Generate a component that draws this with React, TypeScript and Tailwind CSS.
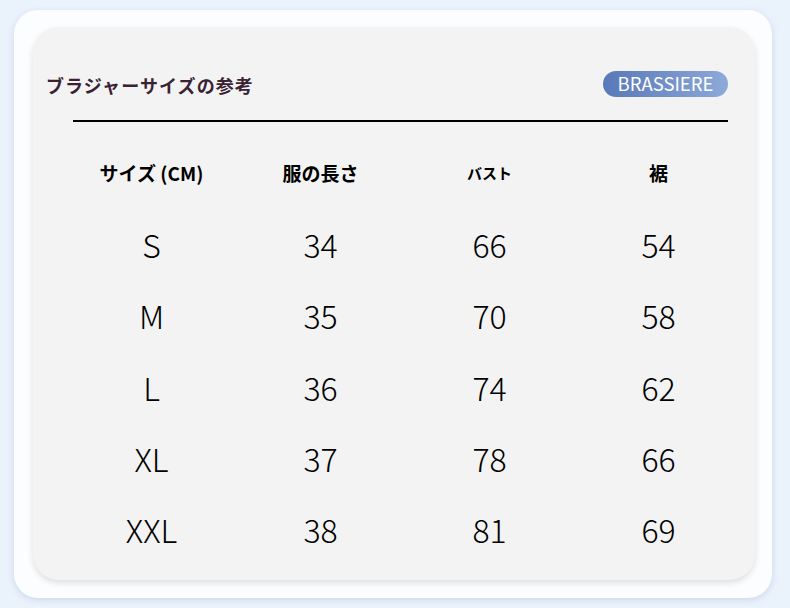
import React from "react";

const rows = [
  ["S", "34", "66", "54"],
  ["M", "35", "70", "58"],
  ["L", "36", "74", "62"],
  ["XL", "37", "78", "66"],
  ["XXL", "38", "81", "69"],
];

export default function App() {
  return (
    <div
      className="w-[790px] h-[608px] bg-[#eaf2fc] pt-[10px] pl-[14px]"
      style={{ fontFamily: '"Noto Sans CJK JP", "Noto Sans", sans-serif' }}
    >
      <div className="w-[758px] h-[588px] bg-[#fcfdff] rounded-[24px] shadow-[0_2px_6px_rgba(150,170,200,0.35)] pt-[17px] pl-[19px]">
        <div className="w-[722px] h-[553px] bg-[#f3f3f3] rounded-[26px] shadow-[0_3px_6px_rgba(0,0,0,0.12)] flex flex-col">
          <div className="flex items-center justify-between pl-[13px] pr-[27px] pt-[28px] h-[85px]">
            <div className="mt-[2px] text-[18px] font-bold text-[#3a2233] leading-none tracking-[1.1px]">
              ブラジャーサイズの参考
            </div>
            <div className="h-[26px] w-[125px] rounded-full bg-gradient-to-r from-[#5878b8] to-[#8ea9d9] text-white text-[18.5px] leading-none flex items-center justify-center">
              BRASSIERE
            </div>
          </div>
          <div className="ml-[40px] mr-[27px] mt-[8px] h-[2px] bg-black" />
          <div className="grid grid-cols-4 ml-[34px] w-[676px] mt-[37px] h-[24px] items-center text-black">
            <div className="text-center text-[19px] font-bold">サイズ (CM)</div>
            <div className="text-center text-[19px] font-bold">服の長さ</div>
            <div className="text-center text-[15px] font-bold">バスト</div>
            <div className="text-center text-[19px] font-bold">裾</div>
          </div>
          <div className="flex flex-col ml-[34px] w-[676px] mt-[27px]">
            {rows.map((r) => (
              <div key={r[0]} className="grid grid-cols-4 h-[71.25px] items-center">
                {r.map((c, i) => (
                  <div key={i} className="text-center">
                    <span className="inline-block text-[32px] font-light text-black leading-none">
                      {c}
                    </span>
                  </div>
                ))}
              </div>
            ))}
          </div>
        </div>
      </div>
    </div>
  );
}
